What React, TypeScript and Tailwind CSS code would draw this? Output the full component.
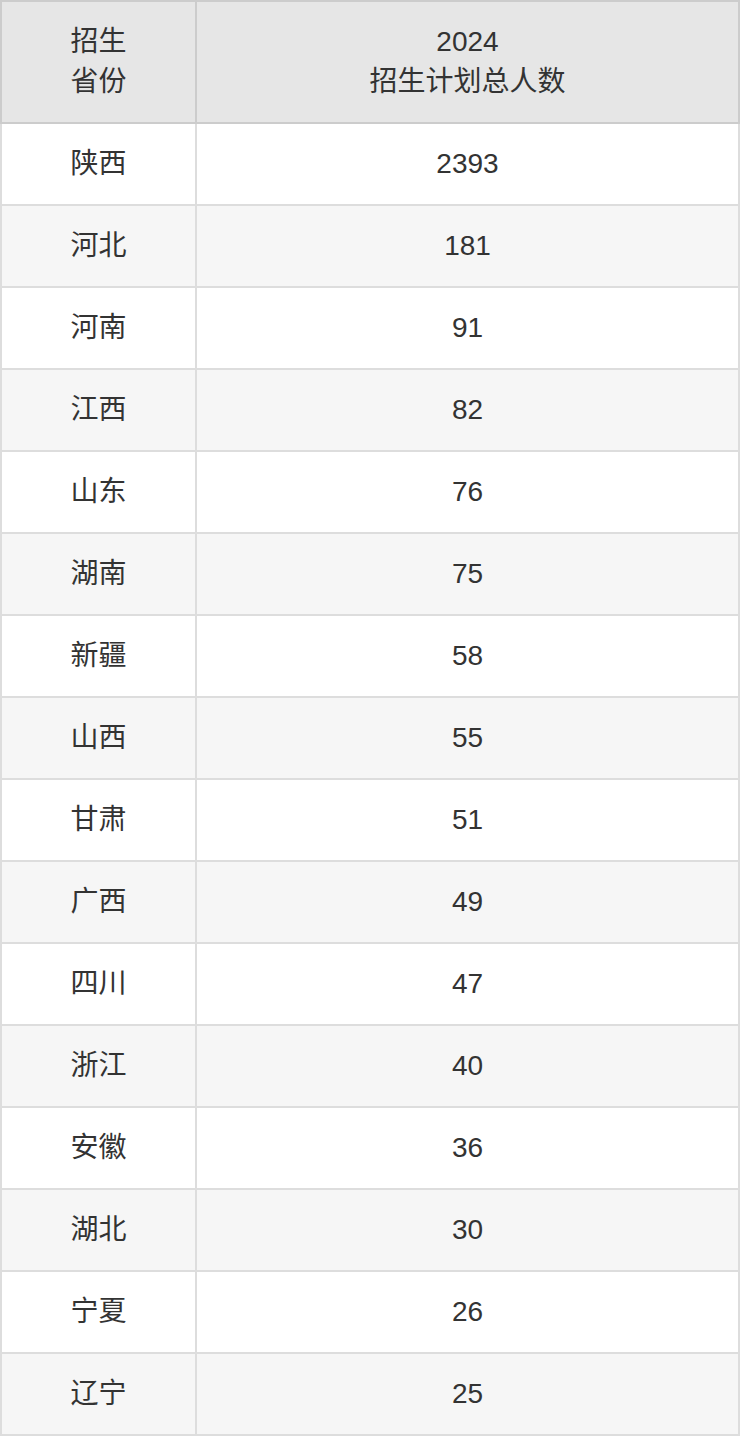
import React from "react";

const rows: [string, string][] = [
  ["陕西", "2393"],
  ["河北", "181"],
  ["河南", "91"],
  ["江西", "82"],
  ["山东", "76"],
  ["湖南", "75"],
  ["新疆", "58"],
  ["山西", "55"],
  ["甘肃", "51"],
  ["广西", "49"],
  ["四川", "47"],
  ["浙江", "40"],
  ["安徽", "36"],
  ["湖北", "30"],
  ["宁夏", "26"],
  ["辽宁", "25"],
];

export default function App() {
  return (
    <div
      className="w-[740px] bg-white text-[#333333] text-[28px] leading-[40px]"
      style={{ fontFamily: '"Liberation Sans", "Noto Sans CJK SC", sans-serif' }}
    >
      <table className="w-full border-collapse table-fixed">
        <colgroup>
          <col className="w-[195px]" />
          <col />
        </colgroup>
        <thead>
          <tr className="bg-[#e6e6e6]">
            <th className="border-2 border-[#cccccc] h-[122px] font-normal text-center align-middle">
              招生
              <br />
              省份
            </th>
            <th className="border-2 border-[#cccccc] h-[122px] font-normal text-center align-middle">
              2024
              <br />
              招生计划总人数
            </th>
          </tr>
        </thead>
        <tbody>
          {rows.map(([p, n], i) => (
            <tr key={p} className={i % 2 === 0 ? "bg-white" : "bg-[#f6f6f6]"}>
              <td className="border-2 border-[#dddddd] h-[82px] text-center align-middle">{p}</td>
              <td className="border-2 border-[#dddddd] h-[82px] text-center align-middle">{n}</td>
            </tr>
          ))}
        </tbody>
      </table>
    </div>
  );
}
